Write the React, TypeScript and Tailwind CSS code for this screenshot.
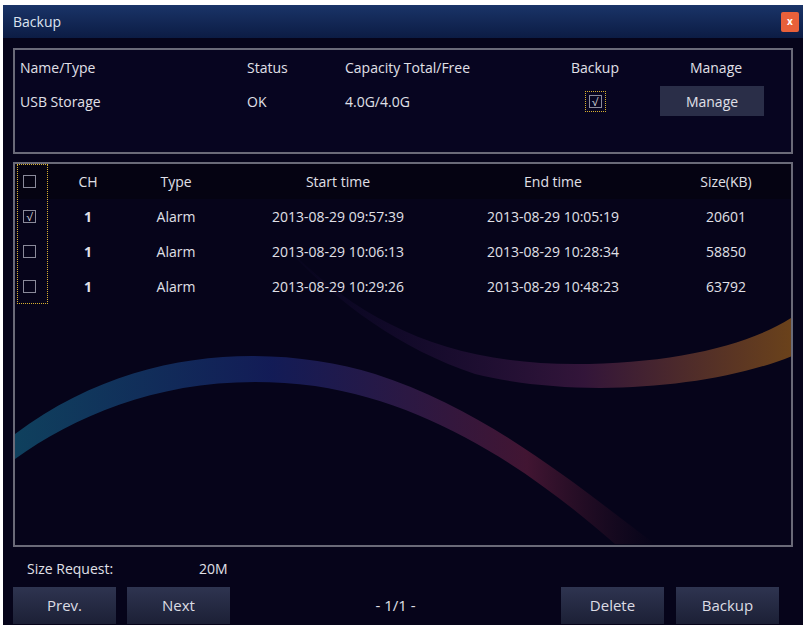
import React from "react";

const Box = ({ checked }: { checked?: boolean }) => (
  <div className="w-[13px] h-[13px] border border-[#8a8a9a] flex items-center justify-center text-[11px] leading-none text-[#d0d0d8]">
    {checked ? "√" : ""}
  </div>
);

const Btn = ({ label, w = "w-[103px]" }: { label: string; w?: string }) => (
  <div className={`${w} h-[37px] bg-gradient-to-b from-[#2e3450] to-[#1c2036] flex items-center justify-center text-[15px] text-[#dcdce4]`}>
    {label}
  </div>
);

const rows = [
  ["1", "Alarm", "2013-08-29 09:57:39", "2013-08-29 10:05:19", "20601", true],
  ["1", "Alarm", "2013-08-29 10:06:13", "2013-08-29 10:28:34", "58850", false],
  ["1", "Alarm", "2013-08-29 10:29:26", "2013-08-29 10:48:23", "63792", false],
] as const;

export default function App() {
  return (
    <div className="w-[806px] h-[629px] bg-white pt-[5px] px-[3px] pb-[4px]" style={{ fontFamily: '"Open Sans", sans-serif' }}>
      <div className="w-full h-full bg-[#06041a] flex flex-col text-[#e0e0e8]">
        <div className="h-[33px] bg-gradient-to-b from-[#1a3468] to-[#0c1c44] flex items-center justify-between pl-[10px] pr-[4px]">
          <span className="text-[14px] text-[#dde4f0]">Backup</span>
          <div className="w-[18px] h-[20px] bg-[#e8603a] rounded-[2px] flex items-center justify-center text-white text-[10px] font-bold">x</div>
        </div>
        <div className="mx-[10px] mt-[10px] h-[106px] border-2 border-[#6a6a78] bg-[#070520] text-[14px]">
          <div className="flex items-center h-[34px]">
            <div className="w-[232px] pl-[5px]">Name/Type</div>
            <div className="w-[98px]">Status</div>
            <div className="w-[204px]">Capacity Total/Free</div>
            <div className="w-[92px] text-center">Backup</div>
            <div className="flex-1 text-center">Manage</div>
          </div>
          <div className="flex items-center h-[34px]">
            <div className="w-[232px] pl-[5px]">USB Storage</div>
            <div className="w-[98px]">OK</div>
            <div className="w-[204px]">4.0G/4.0G</div>
            <div className="w-[92px] flex justify-center">
              <div className="p-[3px] border border-dotted border-[#d8b030]"><Box checked /></div>
            </div>
            <div className="flex-1 flex justify-center pr-[8px]">
              <div className="w-[104px] h-[30px] bg-[#2a2e48] flex items-center justify-center">Manage</div>
            </div>
          </div>
        </div>
        <div className="relative mx-[10px] mt-[8px] h-[385px] border-2 border-[#6a6a78] overflow-hidden text-[14px]">
          <svg className="absolute inset-0" width="782" height="381" viewBox="0 0 782 381">
            <defs>
              <linearGradient id="a" x1="0" x2="1"><stop offset="0" stopColor="#1a8ab0" /><stop offset="0.4" stopColor="#2238a0" /><stop offset="0.8" stopColor="#8a2a50" /><stop offset="1" stopColor="#602030" stopOpacity="0" /></linearGradient>
              <linearGradient id="b" x1="0" x2="1"><stop offset="0" stopColor="#2a1a70" stopOpacity="0" /><stop offset="0.6" stopColor="#6a2a60" /><stop offset="1" stopColor="#e8901a" /></linearGradient>
              <linearGradient id="fade" x1="0" y1="0" x2="0" y2="1"><stop offset="0" stopColor="#06041a" stopOpacity="0" /><stop offset="1" stopColor="#06041a" /></linearGradient>
            </defs>
            <path d="M0 270 C120 180 260 180 360 210 C470 245 560 320 640 380 L600 380 C520 310 420 240 300 222 C170 205 70 245 0 295 Z" fill="url(#a)" opacity="0.45" />
            <path d="M250 60 C330 150 420 200 560 200 C660 200 740 180 782 150 L782 190 C700 225 560 235 460 210 C370 180 300 120 250 60 Z" fill="url(#b)" opacity="0.45" />
          </svg>
          <div className="relative">
            <div className="flex items-center h-[35px] bg-[#05030f]/70">
              <div className="w-[40px] pl-[8px]"><Box /></div>
              <div className="w-[66px] text-center">CH</div>
              <div className="w-[110px] text-center">Type</div>
              <div className="w-[214px] text-center">Start time</div>
              <div className="w-[216px] text-center">End time</div>
              <div className="flex-1 text-center">Size(KB)</div>
            </div>
            {rows.map((r, i) => (
              <div key={i} className="flex items-center h-[35px]">
                <div className="w-[40px] pl-[8px]"><Box checked={r[5]} /></div>
                <div className="w-[66px] text-center font-bold">{r[0]}</div>
                <div className="w-[110px] text-center">{r[1]}</div>
                <div className="w-[214px] text-center">{r[2]}</div>
                <div className="w-[216px] text-center">{r[3]}</div>
                <div className="flex-1 text-center">{r[4]}</div>
              </div>
            ))}
            <div className="absolute left-[2px] top-0 w-[31px] h-[140px] border border-dotted border-[#d8b030]" />
          </div>
        </div>
        <div className="flex items-center h-[36px] pl-[24px] text-[14px] mt-[3px]">
          <span className="w-[172px]">Size Request:</span>
          <span>20M</span>
        </div>
        <div className="flex items-center px-[10px] mt-[1px]">
          <Btn label="Prev." />
          <div className="w-[11px]" />
          <Btn label="Next" />
          <div className="flex-1 text-center text-[15px]">- 1/1 -</div>
          <Btn label="Delete" />
          <div className="w-[12px]" />
          <Btn label="Backup" />
          <div className="w-[14px]" />
        </div>
      </div>
    </div>
  );
}
